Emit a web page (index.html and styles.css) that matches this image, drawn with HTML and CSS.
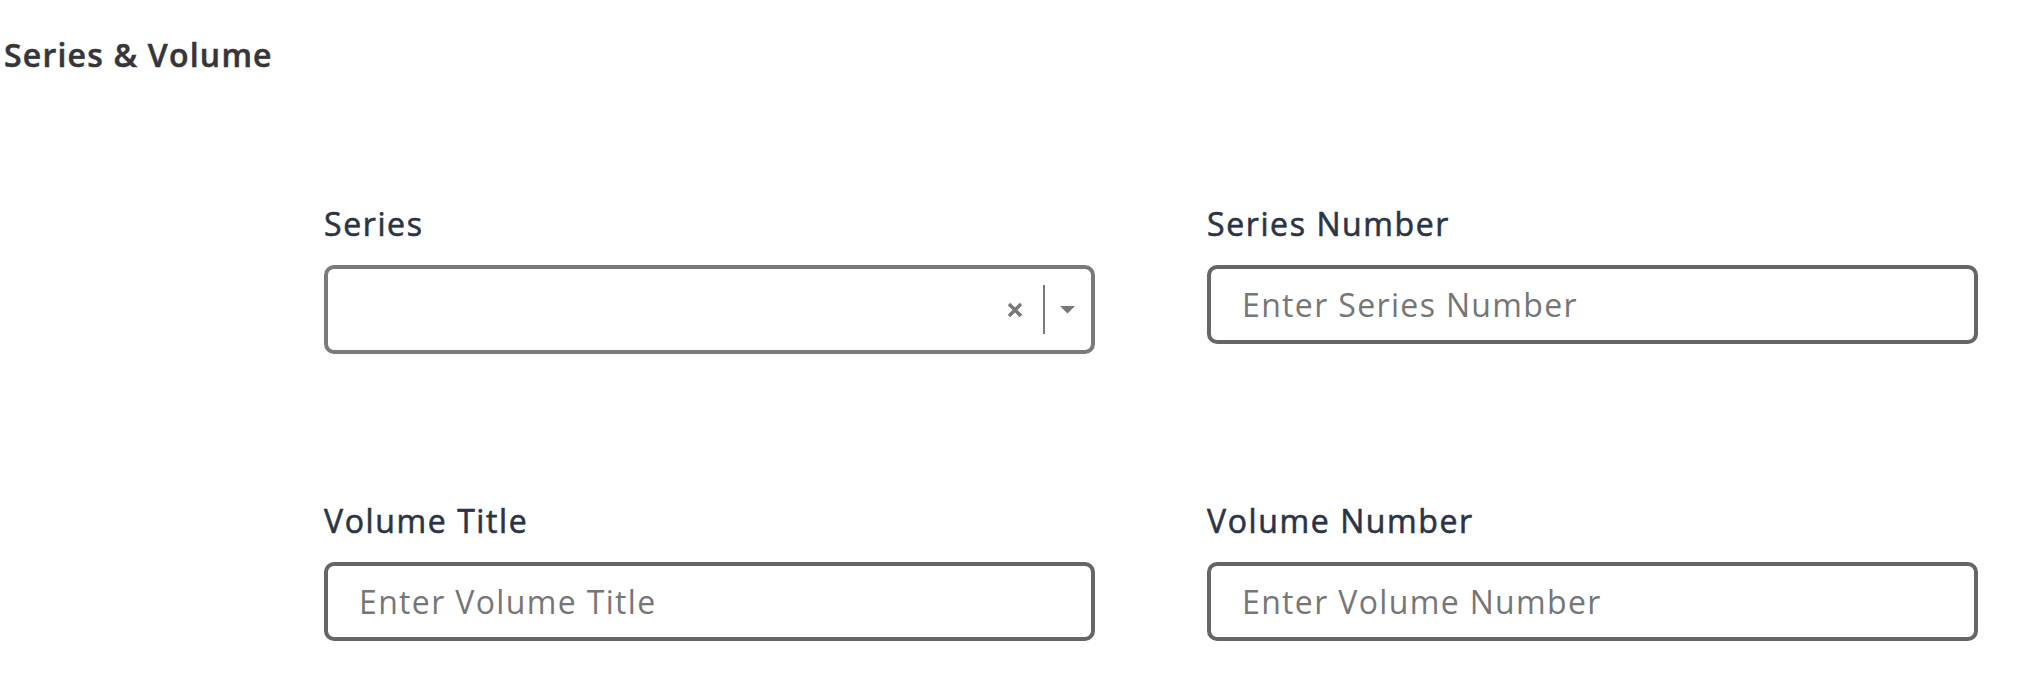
FILE: index.html
```html
<!DOCTYPE html>
<html lang="en">
<head>
<meta charset="utf-8">
<title>Series &amp; Volume</title>
<link rel="stylesheet" href="styles.css">
</head>
<body>
<section class="panel">
  <h2 class="panel-title">Series &amp; Volume</h2>
  <div class="form-grid">
    <div class="field">
      <label class="field-label">Series</label>
      <div class="select">
        <div class="select-value"></div>
        <div class="select-indicators">
          <span class="select-clear">
            <svg width="16" height="16" viewBox="0 0 16 16"><path d="M2 2 L14 14 M14 2 L2 14" stroke="#777" stroke-width="3.4" fill="none"/></svg>
          </span>
          <span class="select-divider"></span>
          <span class="select-caret">
            <svg width="15" height="8" viewBox="0 0 15 8"><path d="M0 0 L15 0 L7.5 7.5 Z" fill="#777"/></svg>
          </span>
        </div>
      </div>
    </div>
    <div class="field">
      <label class="field-label" for="series-number">Series Number</label>
      <input class="text-input" id="series-number" type="text" placeholder="Enter Series Number">
    </div>
    <div class="field">
      <label class="field-label" for="volume-title">Volume Title</label>
      <input class="text-input" id="volume-title" type="text" placeholder="Enter Volume Title">
    </div>
    <div class="field">
      <label class="field-label" for="volume-number">Volume Number</label>
      <input class="text-input" id="volume-number" type="text" placeholder="Enter Volume Number">
    </div>
  </div>
</section>
</body>
</html>
```
FILE: styles.css
```css
html, body {
  margin: 0;
  padding: 0;
  background: #ffffff;
}

body {
  font-family: "Open Sans", "Noto Sans", sans-serif;
}

.panel {
  padding: 35px 0 0 4px;
}

.panel-title {
  margin: 0;
  font-size: 32px;
  line-height: 40px;
  font-weight: 600;
  letter-spacing: 1.2px;
  color: #36353a;
  -webkit-text-stroke: 0.5px #36353a;
}

.form-grid {
  display: grid;
  grid-template-columns: 771px 771px;
  column-gap: 112px;
  row-gap: 147px;
  margin: 129px 0 0 320px;
  align-items: start;
}

.field {
  display: flex;
  flex-direction: column;
}

.field-label {
  font-size: 32px;
  line-height: 40px;
  font-weight: 400;
  letter-spacing: 1.6px;
  color: #2b3446;
  -webkit-text-stroke: 0.6px #2b3446;
  margin: 0 0 21px 0;
}

.text-input {
  box-sizing: border-box;
  width: 100%;
  height: 79px;
  margin: 0;
  padding: 0 31px;
  border: 4px solid #666666;
  border-radius: 10px;
  background: #ffffff;
  font-family: inherit;
  font-size: 32px;
  letter-spacing: 1.35px;
  color: #333333;
  outline: none;
}

.text-input::placeholder {
  color: #767676;
  opacity: 1;
}

.select {
  box-sizing: border-box;
  height: 89px;
  border: 4px solid #7a7a7a;
  border-radius: 10px;
  display: flex;
  align-items: center;
  background: #ffffff;
}

.select-value {
  flex: 1;
}

.select-indicators {
  display: flex;
  align-items: center;
  padding-right: 16px;
}

.select-clear {
  display: flex;
  width: 16px;
  height: 16px;
}

.select-divider {
  width: 2px;
  height: 49px;
  background: #7a7a7a;
  margin: 0 15px 0 20px;
}

.select-caret {
  display: flex;
  width: 15px;
  height: 8px;
}
```
